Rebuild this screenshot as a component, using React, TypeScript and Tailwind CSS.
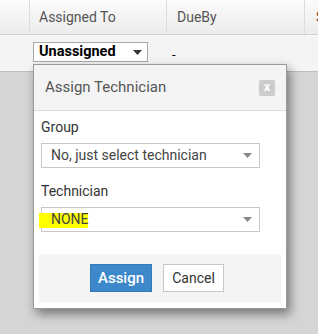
import React from "react";

const Arrow = ({ color = "#777" }: { color?: string }) => (
  <svg width="9" height="5" viewBox="0 0 9 5" className="shrink-0">
    <path d="M0 0 L9 0 L4.5 5 Z" fill={color} />
  </svg>
);

export default function App() {
  return (
    <div
      className="relative w-[318px] h-[334px] overflow-hidden bg-[#d5d5d5]"
      style={{ fontFamily: "Roboto, 'Liberation Sans', sans-serif" }}
    >
      {/* table header */}
      <div className="flex h-[35px] border-b border-[#d0d0d0] bg-gradient-to-b from-[#fbfbfb] to-[#ececec] text-[14px] text-[#555]">
        <div className="w-[30px] shrink-0 border-r border-[#dcdcdc]" />
        <div className="w-[137px] shrink-0 border-r border-[#dcdcdc] flex items-center pl-[9px]">Assigned To</div>
        <div className="w-[138px] shrink-0 border-r border-[#dcdcdc] flex items-center pl-[10px]">DueBy</div>
        <div className="w-[40px] shrink-0 flex items-center pl-[11px] text-[#6a3a2a] whitespace-nowrap">St</div>
      </div>
      {/* row */}
      <div className="h-[37px] bg-[#f4f4f4] border-b border-[#bdbdbd] flex items-start">
        <div className="ml-[33px] mt-[7px] w-[115px] h-[20px] border border-[#a9a9a9] bg-white flex items-center justify-between pl-[5px] pr-[5px]">
          <span className="text-[14.5px] font-bold text-black leading-none">Unassigned</span>
          <Arrow color="#333" />
        </div>
        <span className="ml-[24px] mt-[13px] text-[13px] text-black leading-none">-</span>
      </div>

      {/* modal */}
      <div className="absolute left-[33px] top-[64px] w-[254px] h-[245px] bg-white border border-[#9a9a9a] shadow-[3px_5px_10px_rgba(0,0,0,0.45)] flex flex-col">
        <div className="h-[46px] bg-[#f4f4f4] border-b border-[#dedede] flex items-center justify-between pl-[11px] pr-[11px]">
          <span className="text-[15px] text-[#555]">Assign Technician</span>
          <div className="w-[16px] h-[16px] rounded-[2px] bg-[#cccccc] flex items-center justify-center text-white text-[12px] font-bold leading-none pb-[1px]">x</div>
        </div>
        <div className="pl-[7px] flex flex-col">
          <div className="mt-[6px] leading-[20px] text-[14px] text-[#333]">Group</div>
          <div className="mt-[6px] w-[219px] h-[25px] border border-[#c8c8c8] bg-white flex items-center justify-between pl-[9px] pr-[7px]">
            <span className="text-[14px] text-[#444]">No, just select technician</span>
            <Arrow color="#888" />
          </div>
          <div className="mt-[13px] leading-[20px] text-[14px] text-[#333]">Technician</div>
          <div className="mt-[6px] w-[219px] h-[25px] border border-[#c8c8c8] bg-white flex items-center justify-between pr-[7px] relative">
            <span className="absolute left-[-3px] top-[5px] w-[49px] h-[15px] bg-[#ffff00]" />
            <span className="relative text-[14px] text-[#444] pl-[9px]">NONE</span>
            <Arrow color="#888" />
          </div>
        </div>
        <div className="mt-[22px] mx-[5px] h-[48px] bg-[#f4f4f4] flex items-center pl-[51px] gap-[11px]">
          <button className="w-[62px] h-[28px] bg-[#3c88ca] border border-[#3579b5] text-white text-[15px] font-medium">Assign</button>
          <button className="w-[61px] h-[28px] bg-white border border-[#c8c8c8] text-[#333] text-[14px]">Cancel</button>
        </div>
      </div>
    </div>
  );
}
